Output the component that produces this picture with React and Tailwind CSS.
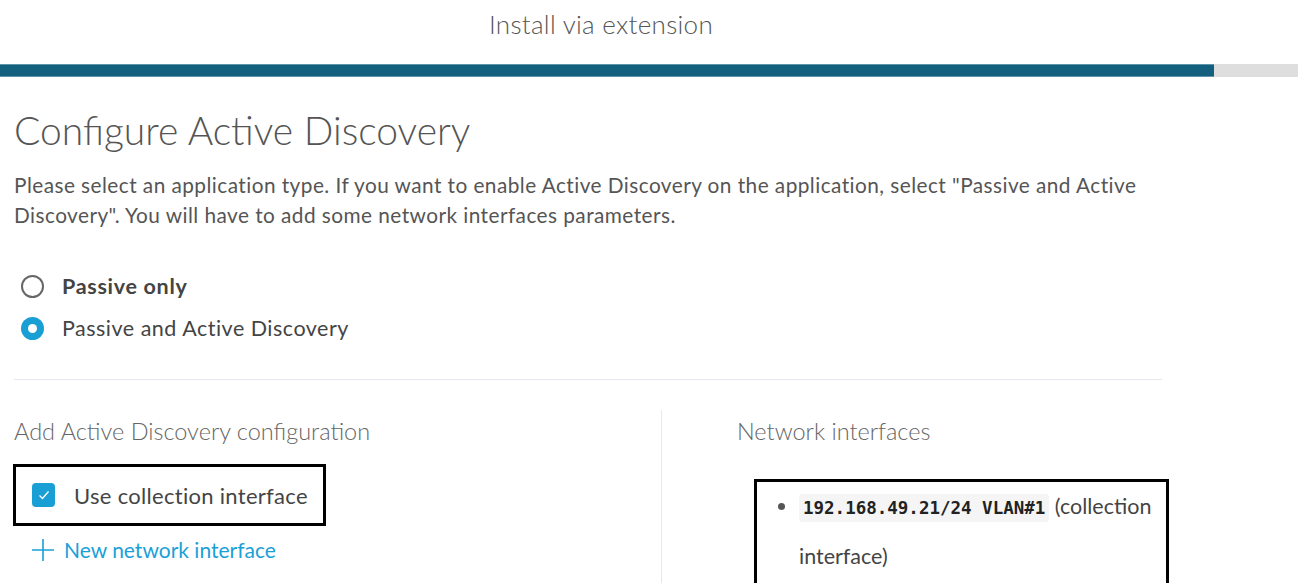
export default function App() {
  return (
    <div className="w-[1298px] h-[583px] overflow-hidden bg-white text-[#555]" style={{ fontFamily: "Lato, 'Open Sans', sans-serif" }}>
      <div className="h-[64px] w-[1202px] flex items-center justify-center pb-[16px]">
        <span className="text-[26px] font-light text-[#555] tracking-[0.3px]">Install via extension</span>
      </div>
      <div className="flex h-[13px]">
        <div className="w-[1214px] bg-[#135f7e] border-y border-[#5d95aa]"></div>
        <div className="flex-1 bg-[#dedede]"></div>
      </div>
      <div className="pl-[14px] w-[1162px]">
        <h1 className="mt-[26px] text-[39px] font-light text-[#555] leading-[54px]">Configure Active Discovery</h1>
        <p className="mt-[13px] text-[20.8px] leading-[30px] text-[#555] tracking-[0.45px]">
          Please select an application type. If you want to enable Active Discovery on the application, select "Passive and Active Discovery". You will have to add some network interfaces parameters.
        </p>
        <div className="mt-[45px] flex flex-col gap-[19px]">
          <div className="flex items-center h-[23px]">
            <span className="ml-[7px] w-[23px] h-[23px] rounded-full border-2 border-[#666] bg-white"></span>
            <span className="ml-[18px] text-[21.5px] font-bold text-[#444] tracking-[0.7px]">Passive only</span>
          </div>
          <div className="flex items-center h-[23px]">
            <span className="ml-[7px] w-[23px] h-[23px] rounded-full bg-[#1a9fd5] flex items-center justify-center">
              <span className="w-[9px] h-[9px] rounded-full bg-white"></span>
            </span>
            <span className="ml-[18px] text-[21.5px] text-[#444] tracking-[0.5px]">Passive and Active Discovery</span>
          </div>
        </div>
        <div className="mt-[39px] border-t border-[#e6e8f0]"></div>
        <div className="flex mt-[30px]">
          <div className="w-[648px] shrink-0 border-r border-[#e8e8e8] h-[200px]">
            <div className="mt-[7px] text-[23.5px] font-light text-[#666] leading-[28px]">Add Active Discovery configuration</div>
            <div className="mt-[19px] ml-[-1px] w-[313px] h-[62px] border-[3px] border-black flex items-center">
              <span className="ml-[16px] w-[23px] h-[24px] rounded-[4px] bg-[#1a9fd5] flex items-center justify-center">
                <svg width="14" height="14" viewBox="0 0 14 14" fill="none" stroke="white" strokeWidth="1.4"><path d="M2.5 7.5 L5.5 10.5 L11.5 3.5" /></svg>
              </span>
              <span className="ml-[19px] text-[22px] text-[#444] tracking-[0.3px]">Use collection interface</span>
            </div>
            <div className="mt-[12px] ml-[18px] flex items-center text-[21px] leading-[24px] text-[#1aa0d8]">
              <svg width="22" height="22" viewBox="0 0 22 22" stroke="#1aa0d8" strokeWidth="1.6"><path d="M11 0 V22 M0 11 H22" /></svg>
              <span className="ml-[10px]">New network interface</span>
            </div>
          </div>
          <div className="pl-[75px] shrink-0">
            <div className="mt-[7px] text-[23.5px] font-light text-[#666] leading-[28px]">Network interfaces</div>
            <div className="mt-[34px] ml-[17px] w-[415px] h-[110px] border-[3px] border-black pl-[21px]">
              <ul className="list-disc pl-[21px] text-[21.5px] text-[#444] leading-[48px] marker:text-[#555]">
                <li>
                  <code className="bg-[#f5f5f5] px-[4px] py-[4px] rounded-[3px] text-[17.5px] text-[#222] font-bold" style={{ fontFamily: "'DejaVu Sans Mono', monospace" }}>192.168.49.21/24 VLAN#1</code> (collection interface)
                </li>
              </ul>
            </div>
          </div>
        </div>
      </div>
    </div>
  );
}
